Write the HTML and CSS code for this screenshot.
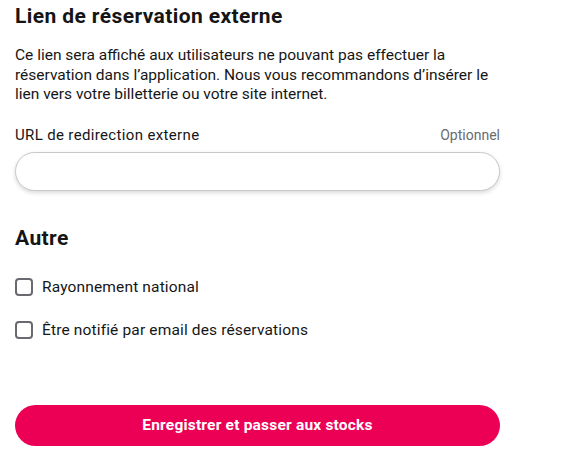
FILE: index.html
```html
<!DOCTYPE html>
<html lang="fr">
<head>
<meta charset="utf-8">
<link rel="stylesheet" href="styles.css">
</head>
<body>
<main class="form">
  <section class="section">
    <h2 class="title">Lien de réservation externe</h2>
    <p class="desc">Ce lien sera affiché aux utilisateurs ne pouvant pas effectuer la réservation dans l’application. Nous vous recommandons d’insérer le lien vers votre billetterie ou votre site internet.</p>
    <div class="field">
      <div class="field-head">
        <label class="label" for="url">URL de redirection externe</label>
        <span class="optional">Optionnel</span>
      </div>
      <input class="input" id="url" type="text">
    </div>
  </section>
  <section class="section section-other">
    <h2 class="title">Autre</h2>
    <label class="check"><span class="box"></span><span>Rayonnement national</span></label>
    <label class="check"><span class="box"></span><span>Être notifié par email des réservations</span></label>
  </section>
  <button class="submit" type="button">Enregistrer et passer aux stocks</button>
</main>
</body>
</html>
```
FILE: styles.css
```css
* { box-sizing: border-box; }
html, body { margin: 0; background: #fff; }
body {
  font-family: Roboto, "Liberation Sans", sans-serif;
  color: #161617;
}
.form {
  width: 485px;
  margin-left: 15px;
  display: flex;
  flex-direction: column;
}
.title {
  margin: 0;
  font-size: 21px;
  line-height: 26px;
  font-weight: 700;
  letter-spacing: 0.4px;
  color: #151515;
}
.section { padding-top: 3px; }
.desc {
  margin: 17px 0 0;
  font-size: 15.5px;
  line-height: 19.5px;
}
.field { margin-top: 21px; }
.field-head {
  display: flex;
  justify-content: space-between;
  align-items: baseline;
  font-size: 15px;
  line-height: 18px;
}
.label { letter-spacing: 0.35px; }
.optional { color: #696a6f; font-size: 14px; }
.input {
  display: block;
  margin-top: 8px;
  width: 100%;
  height: 39px;
  border: 1px solid #c8c8c8;
  border-radius: 20px;
  box-shadow: 0 2px 4px rgba(0,0,0,0.15);
  background: #fff;
  outline: none;
}
.section-other { margin-top: 34px; padding-top: 0; display: flex; flex-direction: column; }
.check {
  display: flex;
  align-items: center;
  gap: 9px;
  font-size: 15.5px;
  letter-spacing: 0.15px;
  line-height: 18px;
  margin-top: 27px;
}
.check + .check { margin-top: 25px; }
.box {
  width: 18px;
  height: 18px;
  border: 2px solid #696a6f;
  border-radius: 4px;
  flex: none;
}
.submit {
  margin-top: 66px;
  height: 41px;
  border: none;
  border-radius: 20.5px;
  background: #eb0055;
  color: #fff;
  font-family: inherit;
  font-weight: 700;
  font-size: 15.5px;
  letter-spacing: 0.2px;
}
```
